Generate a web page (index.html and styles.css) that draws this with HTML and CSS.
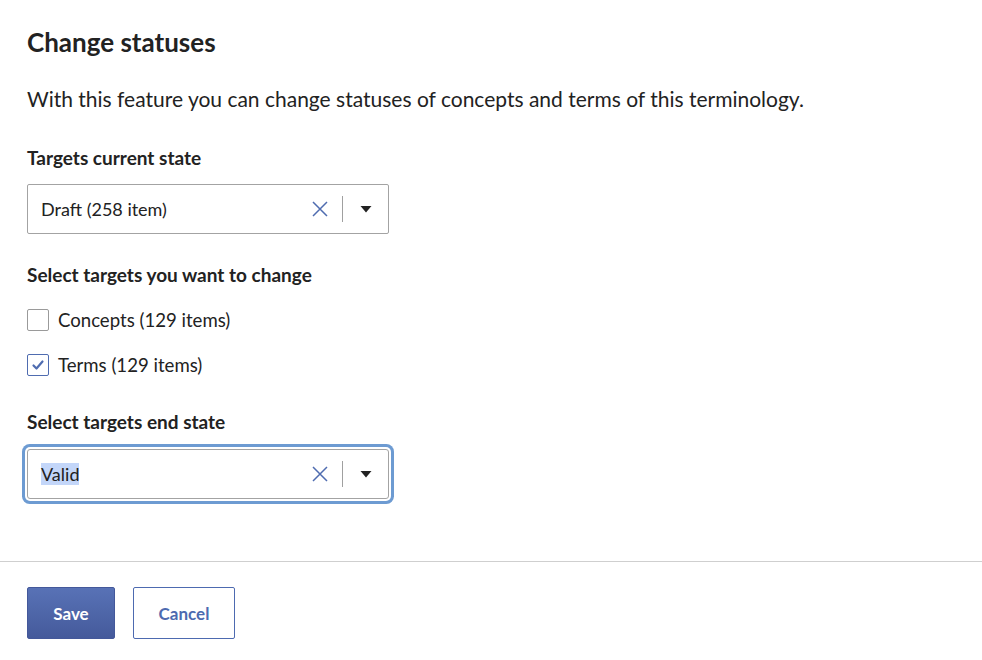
FILE: index.html
```html
<!DOCTYPE html>
<html lang="en">
<head>
<meta charset="utf-8">
<title>Change statuses</title>
<link rel="stylesheet" href="styles.css">
</head>
<body>
<div class="modal">
  <div class="content">
    <h2 class="title">Change statuses</h2>
    <p class="desc">With this feature you can change statuses of concepts and terms of this terminology.</p>

    <div class="field first">
      <div class="label">Targets current state</div>
      <div class="select">
        <span class="value">Draft (258 item)</span>
        <span class="clear"><svg width="18" height="18" viewBox="0 0 18 18"><path d="M2 2L16 16M16 2L2 16" stroke="#4f6cb0" stroke-width="1.5" fill="none"/></svg></span>
        <span class="divider"></span>
        <span class="arrow"><svg width="12" height="8" viewBox="0 0 12 8"><path d="M0.5 1H11.5L6 7.5Z" fill="#222"/></svg></span>
      </div>
    </div>

    <div class="field">
      <div class="label">Select targets you want to change</div>
      <div class="checks">
        <label class="check">
          <span class="box"></span>
          <span class="check-text">Concepts (129 items)</span>
        </label>
        <label class="check">
          <span class="box checked"><svg width="14" height="12" viewBox="0 0 14 12"><path d="M2.5 6.5L5.5 9.5L11.5 2.5" stroke="#4f6cb0" stroke-width="2.2" fill="none" stroke-linecap="round" stroke-linejoin="round"/></svg></span>
          <span class="check-text">Terms (129 items)</span>
        </label>
      </div>
    </div>

    <div class="field">
      <div class="label">Select targets end state</div>
      <div class="select focused">
        <span class="value"><span class="selected-text">Valid</span></span>
        <span class="clear"><svg width="18" height="18" viewBox="0 0 18 18"><path d="M2 2L16 16M16 2L2 16" stroke="#4f6cb0" stroke-width="1.5" fill="none"/></svg></span>
        <span class="divider"></span>
        <span class="arrow"><svg width="12" height="8" viewBox="0 0 12 8"><path d="M0.5 1H11.5L6 7.5Z" fill="#222"/></svg></span>
      </div>
    </div>
  </div>
  <div class="footer">
    <button class="btn primary">Save</button>
    <button class="btn secondary">Cancel</button>
  </div>
</div>
</body>
</html>
```

FILE: styles.css
```css
* { box-sizing: border-box; }
html, body { margin: 0; padding: 0; background: #fff; }
body {
  font-family: Lato, "Noto Sans", sans-serif;
  color: #212121;
}
.modal { width: 982px; }
.content { padding: 26px 27px 0 27px; }
.title {
  margin: 0;
  font-size: 26px;
  font-weight: 700;
  line-height: 32px;
  color: #222;
}
.desc {
  margin: 27px 0 0 0;
  font-size: 21px;
  line-height: 28px;
  color: #222;
}
.field { margin-top: 29px; }
.field.first { margin-top: 33px; }
.label {
  font-size: 19px;
  font-weight: 700;
  line-height: 24px;
  color: #222;
}
.select {
  margin-top: 14px;
  width: 362px;
  height: 50px;
  border: 1px solid #a3a3a3;
  border-radius: 2px;
  display: flex;
  align-items: center;
  padding-left: 13px;
  background: #fff;
}
.select.focused {
  box-shadow: 0 0 0 2px #fff, 0 0 0 5px #6d9bd2;
  border-radius: 3px;
  margin-top: 15px;
}
.value { flex: 1; font-size: 18px; color: #222; }
.selected-text { background: #c3d6f9; }
.clear { display: flex; width: 18px; height: 18px; margin-right: 13px; }
.divider { width: 1px; height: 26px; background: #a0a0a0; }
.arrow { display: flex; width: 45px; justify-content: center; }
.checks {
  margin-top: 17px;
  display: flex;
  flex-direction: column;
  gap: 13px;
}
.check {
  display: flex;
  align-items: center;
  height: 32px;
}
.box {
  width: 22px;
  height: 22px;
  border: 1px solid #9a9a9a;
  border-radius: 2px;
  display: flex;
  align-items: center;
  justify-content: center;
  background: #fff;
}
.box.checked { border-color: #4f6cb0; }
.check-text { margin-left: 9px; font-size: 18.6px; color: #222; }
.footer {
  margin-top: 62px;
  border-top: 1px solid #cfcfcf;
  padding: 25px 27px;
  display: flex;
  gap: 18px;
}
.btn {
  height: 52px;
  font-family: inherit;
  font-size: 17px;
  font-weight: 700;
  border-radius: 2px;
  cursor: pointer;
}
.primary {
  width: 88px;
  color: #fff;
  border: 1px solid #44589a;
  background: linear-gradient(#5872b6, #455a9b);
}
.secondary {
  width: 102px;
  color: #4d6ab0;
  border: 1px solid #4d6ab0;
  background: #fff;
}
```
